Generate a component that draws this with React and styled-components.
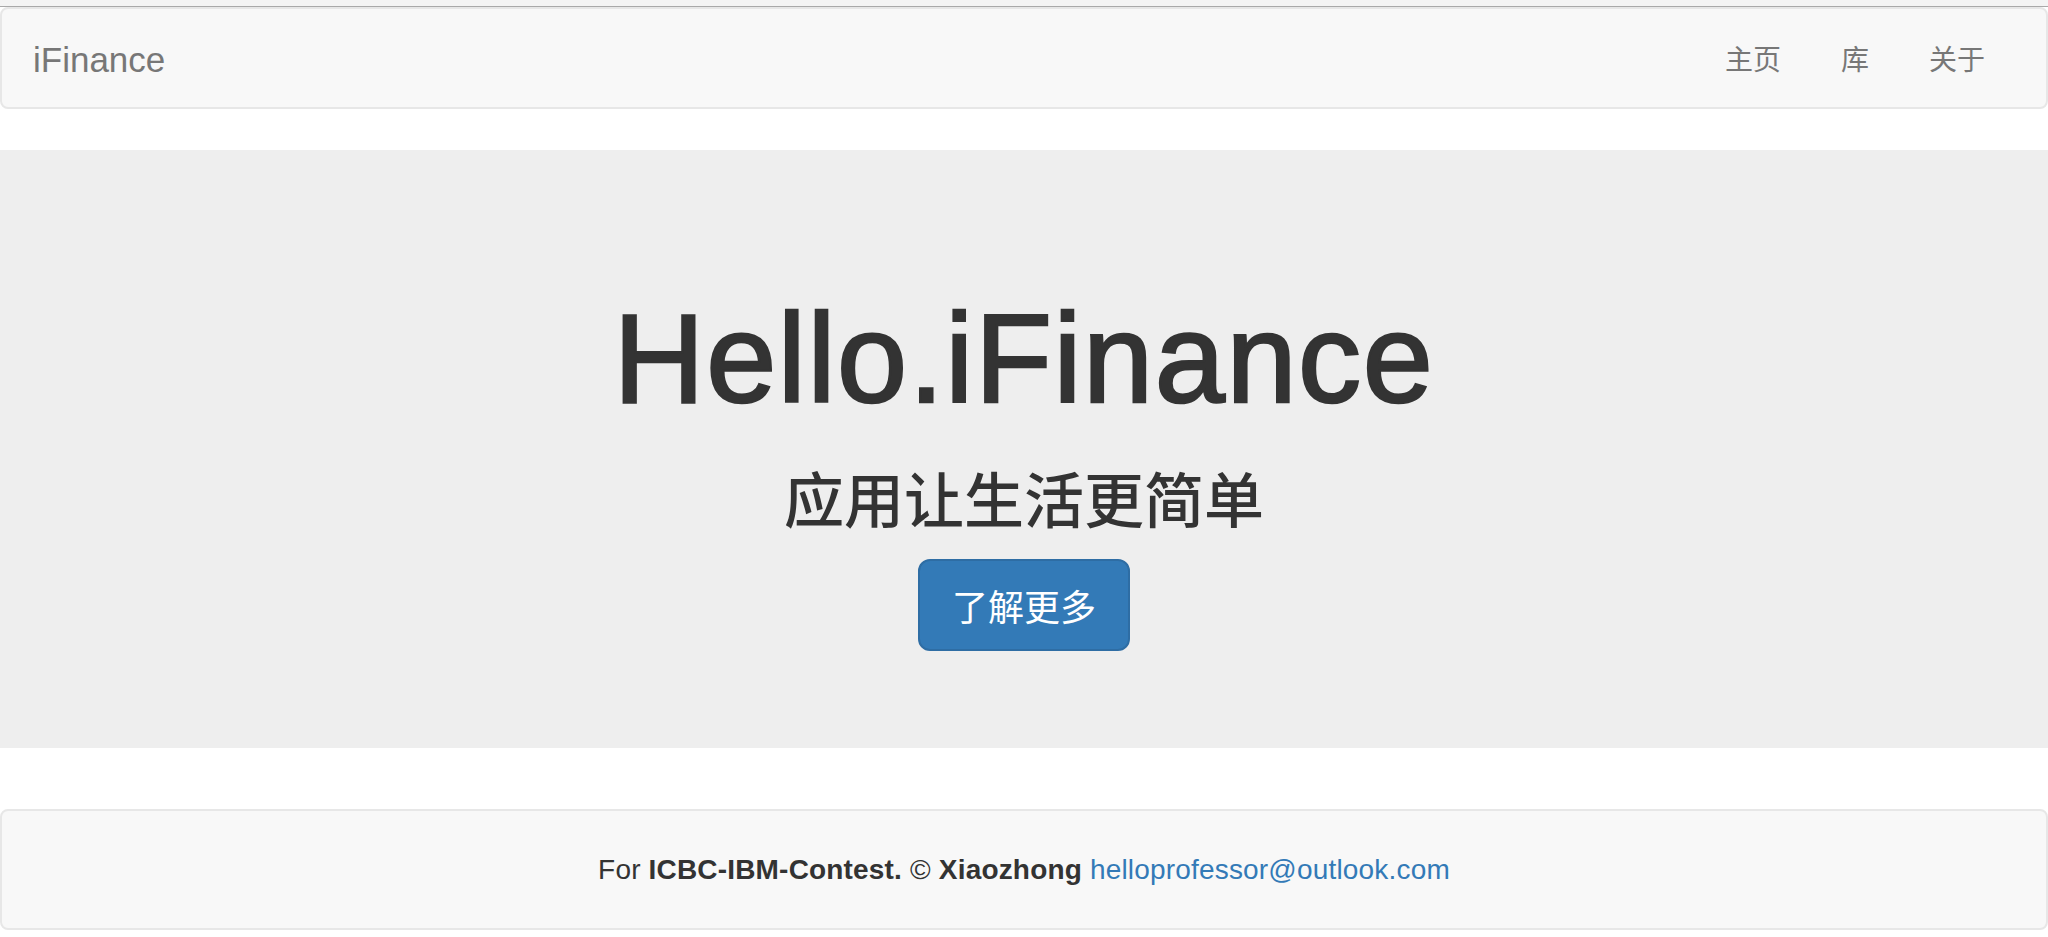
import React from 'react';
import styled, {createGlobalStyle} from 'styled-components';

const GlobalStyle = createGlobalStyle`
  html, body {
    margin: 0;
    padding: 0;
    background: #fff;
  }
  body {
    font-family: "Liberation Sans", "Noto Sans CJK SC", Arial, sans-serif;
    color: #333;
  }
  * {
    box-sizing: border-box;
  }
`;

const TopStrip = styled.div`
  height: 7px;
  background: #f4f4f4;
  border-bottom: 1px solid #a9a9a9;
`;

const Navbar = styled.nav`
  display: flex;
  align-items: center;
  justify-content: space-between;
  height: 102px;
  margin-bottom: 41px;
  padding: 0 31px 0 31px;
  background: #f8f8f8;
  border: 2px solid #e7e7e7;
  border-radius: 8px;
`;

const Brand = styled.a`
  margin-top: 4px;
  font-family: "Liberation Sans", Arial, sans-serif;
  font-size: 35px;
  line-height: 40px;
  color: #777;
  text-decoration: none;
`;

const NavList = styled.ul`
  display: flex;
  margin: 0;
  padding: 0;
  list-style: none;
`;

const NavLink = styled.a`
  display: block;
  padding: 0 30px;
  font-family: "Noto Sans CJK SC", "Liberation Sans", sans-serif;
  font-size: 28px;
  line-height: 40px;
  color: #777;
  text-decoration: none;
`;

const Jumbotron = styled.section`
  display: flex;
  flex-direction: column;
  align-items: center;
  height: 598px;
  background: #eee;
`;

const Title = styled.h1`
  margin: 140px 0 0;
  font-family: "Liberation Sans", Arial, sans-serif;
  font-size: 126px;
  font-weight: 400;
  line-height: 138px;
  letter-spacing: 1.6px;
  color: #333;
  -webkit-text-stroke: 2.5px #333;
`;

const Subtitle = styled.h2`
  margin: 36px 0 0;
  font-family: "Noto Sans CJK SC", sans-serif;
  font-size: 60px;
  font-weight: 500;
  line-height: 66px;
  color: #333;
`;

const Button = styled.a`
  display: inline-block;
  margin-top: 29px;
  padding: 20px 32px;
  font-family: "Noto Sans CJK SC", sans-serif;
  font-size: 36px;
  line-height: 48px;
  color: #fff;
  background: #337ab7;
  border: 2px solid #2e6da4;
  border-radius: 12px;
  text-decoration: none;
`;

const Footer = styled.footer`
  display: flex;
  align-items: center;
  justify-content: center;
  height: 121px;
  margin: 61px 0 8px;
  background: #f8f8f8;
  border: 2px solid #e7e7e7;
  border-radius: 8px;
  font-family: "Liberation Sans", Arial, sans-serif;
  font-size: 28px;
  line-height: 40px;
  letter-spacing: 0.18px;
  color: #333;
`;

const Mail = styled.a`
  color: #337ab7;
  text-decoration: none;
`;

const links = ['主页', '库', '关于'];

const App = () => (
  <>
    <GlobalStyle/>
    <TopStrip/>
    <Navbar>
      <Brand href="#">iFinance</Brand>
      <NavList>
        {links.map(l => (
          <li key={l}><NavLink href="#">{l}</NavLink></li>
        ))}
      </NavList>
    </Navbar>
    <Jumbotron>
      <Title>Hello.iFinance</Title>
      <Subtitle>应用让生活更简单</Subtitle>
      <Button href="#">了解更多</Button>
    </Jumbotron>
    <Footer>
      <span>
        For <b>ICBC-IBM-Contest.</b> © <b>Xiaozhong</b>{' '}
        <Mail href="mailto:helloprofessor@outlook.com">helloprofessor@outlook.com</Mail>
      </span>
    </Footer>
  </>
);

export default App;
